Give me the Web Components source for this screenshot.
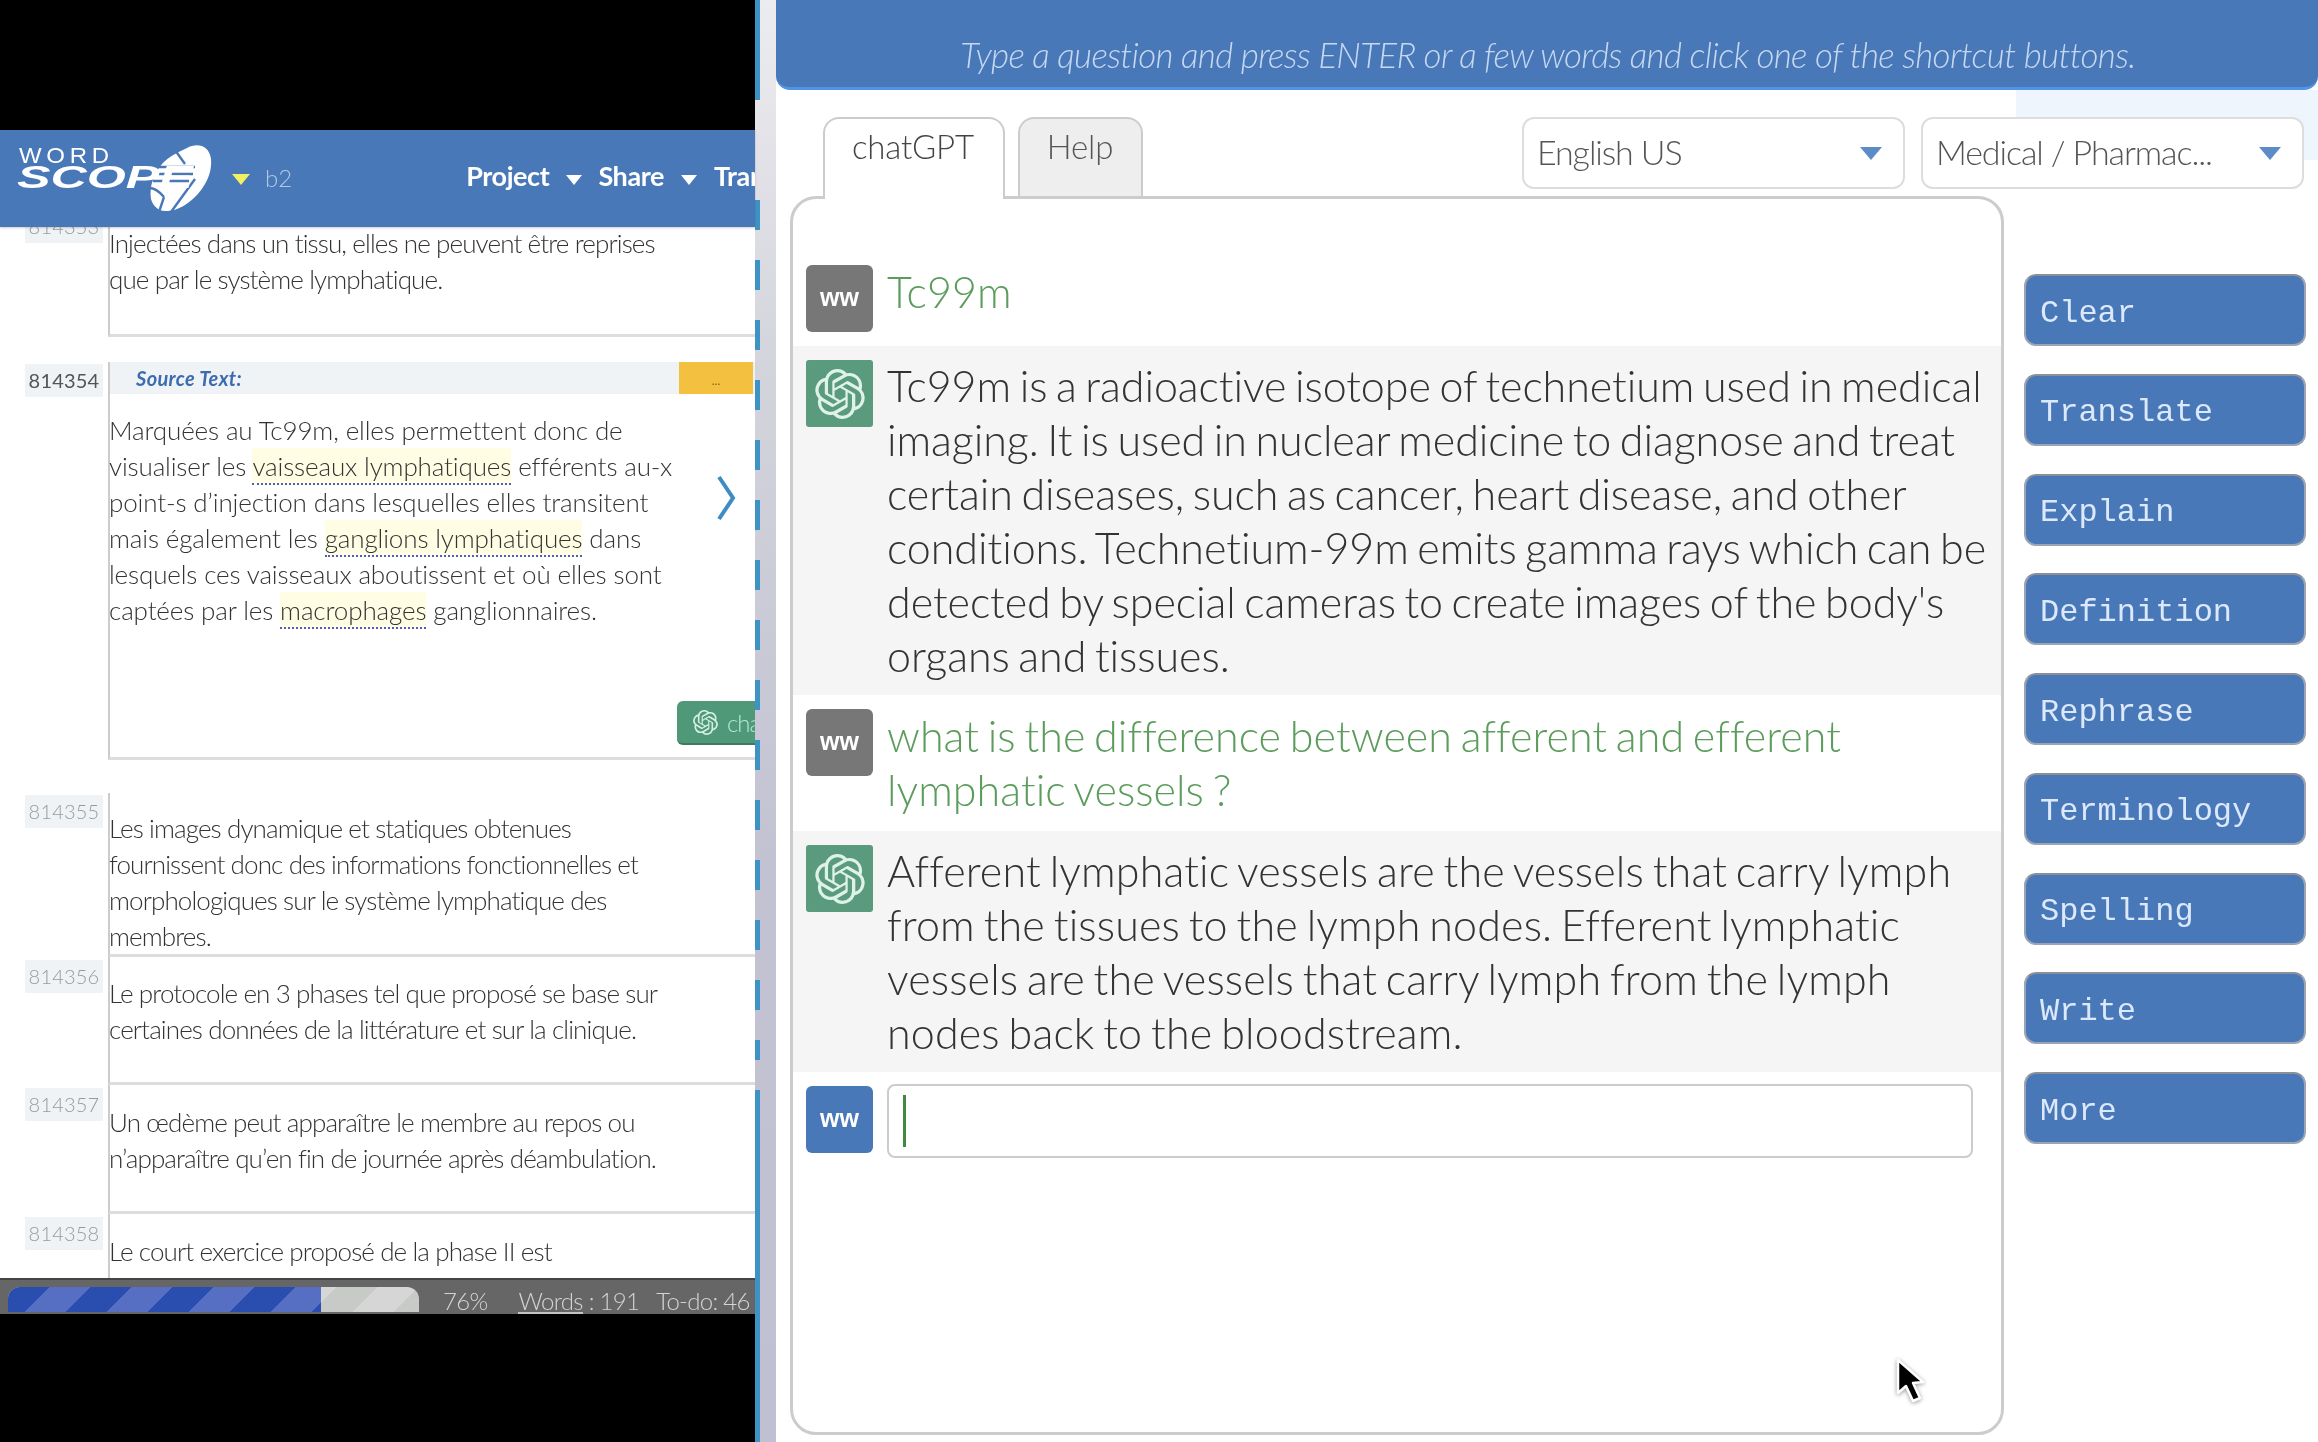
<!DOCTYPE html>
<html lang="en"><head><meta charset="utf-8"><title>Wordscope</title>
<style>
html,body{margin:0;padding:0;height:1442px;width:2318px;overflow:hidden;background:#fff;font-family:Lato,"Liberation Sans",sans-serif}
body{display:flex;filter:blur(.5px)}
</style></head><body>
<wc-editor>
  <wc-segment num="814353" height="127" top="15" offset="-17" idtop="0" style="--id:#999">Injectées dans un tissu, elles ne peuvent être reprises<br>que par le système lymphatique.</wc-segment>
  <wc-segment num="814354" height="398" top="18" gap="25" idtop="2" active style="--id:#555">Marquées au Tc99m, elles permettent donc de<br>visualiser les <wc-term>vaisseaux lymphatiques</wc-term> efférents au-x<br>point-s d’injection dans lesquelles elles transitent<br>mais également les <wc-term>ganglions lymphatiques</wc-term> dans<br>lesquels ces vaisseaux aboutissent et où elles sont<br>captées par les <wc-term>macrophages</wc-term> ganglionnaires.</wc-segment>
  <wc-segment num="814355" height="163" top="17" gap="33" idtop="2" style="--id:#999">Les images dynamique et statiques obtenues<br>fournissent donc des informations fonctionnelles et<br>morphologiques sur le système lymphatique des<br>membres.</wc-segment>
  <wc-segment num="814356" height="129" top="19" idtop="4" style="--id:#999">Le protocole en 3 phases tel que proposé se base sur<br>certaines données de la littérature et sur la clinique.</wc-segment>
  <wc-segment num="814357" height="129" top="19" idtop="3" style="--id:#999">Un œdème peut apparaître le membre au repos ou<br>n’apparaître qu’en fin de journée après déambulation.</wc-segment>
  <wc-segment num="814358" height="80" top="19" idtop="3" open style="--id:#999">Le court exercice proposé de la phase II est</wc-segment>
</wc-editor>
<wc-divider></wc-divider>
<wc-assistant>
  <wc-msg who="user" kind="q" style="letter-spacing:.05px">Tc99m</wc-msg>
  <wc-msg who="ai" style="letter-spacing:-.06px">Tc99m is a radioactive isotope of technetium used in medical<br>imaging. It is used in nuclear medicine to diagnose and treat<br>certain diseases, such as cancer, heart disease, and other<br>conditions. Technetium-99m emits gamma rays which can be<br>detected by special cameras to create images of the body's<br>organs and tissues.</wc-msg>
  <wc-msg who="user" kind="q" style="letter-spacing:.05px">what is the difference between afferent and efferent<br>lymphatic vessels ?</wc-msg>
  <wc-msg who="ai" style="letter-spacing:.15px">Afferent lymphatic vessels are the vessels that carry lymph<br>from the tissues to the lymph nodes. Efferent lymphatic<br>vessels are the vessels that carry lymph from the lymph<br>nodes back to the bloodstream.</wc-msg>
  <wc-prompt></wc-prompt>
</wc-assistant>
<wc-cursor></wc-cursor>
<script>
const OPENAI='M22.2819 9.8211a5.9847 5.9847 0 0 0-.5157-4.9108 6.0462 6.0462 0 0 0-6.5098-2.9A6.0651 6.0651 0 0 0 4.9807 4.1818a5.9847 5.9847 0 0 0-3.9977 2.9 6.0462 6.0462 0 0 0 .7427 7.0966 5.98 5.98 0 0 0 .511 4.9107 6.051 6.051 0 0 0 6.5146 2.9001A5.9847 5.9847 0 0 0 13.2599 24a6.0557 6.0557 0 0 0 5.7718-4.2058 5.9894 5.9894 0 0 0 3.9977-2.9001 6.0557 6.0557 0 0 0-.7475-7.0729zm-9.022 12.6081a4.4755 4.4755 0 0 1-2.8764-1.0408l.1419-.0804 4.7783-2.7582a.7948.7948 0 0 0 .3927-.6813v-6.7369l2.02 1.1686a.071.071 0 0 1 .038.052v5.5826a4.504 4.504 0 0 1-4.4945 4.4944zm-9.6607-4.1254a4.4708 4.4708 0 0 1-.5346-3.0137l.142.0852 4.783 2.7582a.7712.7712 0 0 0 .7806 0l5.8428-3.3685v2.3324a.0804.0804 0 0 1-.0332.0615L9.74 19.9502a4.4992 4.4992 0 0 1-6.1408-1.6464zM2.3408 7.8956a4.485 4.485 0 0 1 2.3655-1.9728V11.6a.7664.7664 0 0 0 .3879.6765l5.8144 3.3543-2.0201 1.1685a.0757.0757 0 0 1-.071 0l-4.8303-2.7865A4.504 4.504 0 0 1 2.3408 7.872zm16.5963 3.8558L13.1038 8.364 15.1192 7.2a.0757.0757 0 0 1 .071 0l4.8303 2.7913a4.4944 4.4944 0 0 1-.6765 8.1042v-5.6772a.79.79 0 0 0-.407-.667zm2.0107-3.0231l-.142-.0852-4.7735-2.7818a.7759.7759 0 0 0-.7854 0L9.409 9.2297V6.8974a.0662.0662 0 0 1 .0284-.0615l4.8303-2.7866a4.4992 4.4992 0 0 1 6.6802 4.66zM8.3065 12.863l-2.02-1.1638a.0804.0804 0 0 1-.038-.0567V6.0742a4.4992 4.4992 0 0 1 7.3757-3.4537l-.142.0805L8.704 5.459a.7948.7948 0 0 0-.3927.6813zm1.0976-2.3654l2.602-1.4998 2.6069 1.4998v2.9994l-2.5974 1.4997-2.6067-1.4997Z';
const logoSvg=(s,c)=>`<svg viewBox="0 0 24 24" width="${s}" height="${s}" fill="${c}" style="flex:none"><path d="${OPENAI}"/></svg>`;
function comp(name,css,html,init){
  customElements.define(name,class extends HTMLElement{
    constructor(){super();this.attachShadow({mode:'open'});}
    connectedCallback(){
      const h=typeof html==='function'?html(this):html;
      this.shadowRoot.innerHTML=`<style>${css}</style>${h}`;
      if(init)init(this);
    }
  });
}
comp('wc-logo',`
:host{display:inline-grid;width:196px;height:70px;color:#fff;flex:none}
.t{grid-area:1/1;align-self:start;font-family:"Liberation Sans",sans-serif;white-space:nowrap}
.w{font-size:24px;line-height:17px;letter-spacing:4.7px;margin-top:4px;transform:scaleY(.9);transform-origin:top left}
.s{font-size:31px;line-height:24px;font-weight:700;font-style:italic;margin-top:22.5px;transform:scaleX(1.62);transform-origin:left top;margin-left:-2px}
svg{grid-area:1/1;justify-self:start;width:196px;height:70px;overflow:visible}
`,`<div class="t w">WORD</div><div class="t s">SCOPE</div>
<svg viewBox="0 0 196 70"><g transform="translate(-20,-146)">
<path fill="#fff" d="M188 150C197 145 210 146 212 161C213 172 209 181 206 186C198 200 182 213 168 213C160 214 154 208 152 201C150 188 155 176 163 166C170 158 180 154 188 150Z"/>
<path fill="none" stroke="#4878b8" stroke-width="2.4" d="M160 169H196M158 176H194M154 183H190M176 152L186 166M196 181L172 214M150 190C156 190 160 193 165 199M165 199L160 214"/>
</g></svg>`);
comp('wc-nav',`:host{display:flex;align-items:center;white-space:nowrap;color:#fff;font:700 27px Lato,sans-serif;letter-spacing:-.4px}
i{display:inline-block;width:0;height:0;border:8px solid transparent;border-top:10px solid #fff;border-bottom:0;margin:9px 0 0 0;}`,
`<span>Project</span><i style="margin-left:17px;margin-right:16px"></i><span>Share</span><i style="margin-left:17px;margin-right:17px"></i><span>Translate</span>`);
comp('wc-editor-bar',`
:host{display:flex;align-items:center;height:97px;background:#4878b8;padding:0 0 0 19px;overflow:hidden;flex:none;position:relative;z-index:2;box-shadow:0 1px 2px rgba(0,0,0,.2)}
.c{width:0;height:0;border:9.5px solid transparent;border-top:11px solid #f2f060;border-bottom:0;margin-left:17px;margin-top:2px}
.b{margin-left:15px;font:300 24px Lato,sans-serif;color:#b4c8e4;margin-top:-3px}
wc-nav{margin-left:174px;margin-top:-6px}
`,`<wc-logo></wc-logo><span class="c"></span><span class="b">b2</span><wc-nav></wc-nav>`);
comp('wc-term',`:host{display:inline;background:#fffee4;border-bottom:2px dotted #4a5ec4;padding:2px 0 1px}`,`<slot></slot>`);
comp('wc-segment',`
:host{display:block;--h:100px}
.row{display:grid;grid-template-columns:108px 1fr;height:var(--h)}
.id{margin-left:25px;width:78px;height:33px;background:#f0f3f5;color:var(--id,#999);font:300 20px/33px Lato,"Liberation Sans",sans-serif;text-align:center;letter-spacing:.2px;margin-top:var(--idtop,0)}
:host([active]) .id{font-weight:400}
.box{border-left:2px solid #ccc;border-bottom:3px solid #ddd;position:relative;min-width:0}
.box.open{border-bottom:0}
.head{display:flex;height:32px;background:#f0f3f6}
.src{flex:1;padding-left:26px;font:italic 700 20px/32px Lato,sans-serif;letter-spacing:.35px;color:#3c6cb0}
.dots{width:74px;margin-right:2px;background:#f4c040;color:#7a5a18;font:12px/38px Lato,sans-serif;text-align:center}
.txt{white-space:nowrap;color:#333;font:300 26px/36px Lato,sans-serif;letter-spacing:-.88px;padding-top:var(--top,18px);margin-left:-1px}
:host([active]) .txt{letter-spacing:-.13px}
.chev{position:absolute;left:605px;top:113px}
.chat{position:absolute;left:567px;top:339px;width:120px;height:44px;box-sizing:border-box;background:#4f9878;border-radius:6px;border-bottom:2px solid #3e7a60;display:flex;align-items:center;gap:9px;padding-left:16px;color:#b4e8d0;font:300 24px Lato,sans-serif;letter-spacing:-1px;white-space:nowrap}
`,el=>{
  const active=el.hasAttribute('active'),open=el.hasAttribute('open');
  el.style.setProperty('--h',el.getAttribute('height')+'px');
  el.style.setProperty('--top',el.getAttribute('top')+'px');
  el.style.setProperty('--idtop',el.getAttribute('idtop')+'px');
  el.style.marginTop=(el.getAttribute('offset')||el.getAttribute('gap')||0)+'px';
  return `<div class="row"><div class="id">${el.getAttribute('num')}</div><div class="box ${open?'open':''}">`+
  (active?`<div class="head"><div class="src">Source Text:</div><div class="dots">...</div></div>`:'')+
  `<div class="txt"><slot></slot></div>`+
  (active?`<svg class="chev" width="22" height="46" viewBox="0 0 22 46"><path d="M4 2L18 23L4 44" fill="none" stroke="#3d8cc4" stroke-width="4"/></svg>
  <div class="chat">${logoSvg(25,'#d4efe2')}<span>chatGPT</span></div>`:'')+`</div></div>`;
});
comp('wc-progress',`
:host{display:block;width:411px;height:25px;border-radius:12px 12px 0 0;overflow:hidden;background:repeating-linear-gradient(135deg,#c8cac8 0 29px,#d6d6d6 29px 58px);flex:none}
div{width:313px;height:100%;background:repeating-linear-gradient(135deg,#2a4db0 0 29px,#566fc2 29px 58px)}
`,`<div></div>`);
comp('wc-status',`
:host{display:flex;align-items:center;height:36px;box-sizing:border-box;flex:none;background:#666;border-top:2px solid #444;padding:7px 0 0 8px;color:#d4d4d4;font:300 24px Lato,sans-serif;letter-spacing:-.7px;white-space:nowrap;overflow:hidden}
wc-progress{align-self:flex-start}
u{text-decoration:none;border-bottom:2px solid #c4c4c4;display:inline-block;line-height:22px}
.a{margin-left:24px}.b{margin-left:31px}.c{margin-left:17px}
`,`<wc-progress></wc-progress><span class="a">76%</span><span class="b"><u>Words</u> : 191</span><span class="c">To-do: 46</span>`);
comp('wc-editor',`
:host{display:flex;flex-direction:column;width:755px;height:1442px;flex:none;background:#000}
.top{height:130px;flex:none}.bottom{flex:1}
.list{height:1051px;flex:none;background:#fff;overflow:hidden}
`,`<div class="top"></div><wc-editor-bar></wc-editor-bar><div class="list"><slot></slot></div><wc-status></wc-status><div class="bottom"></div>`);
comp('wc-divider',`
:host{display:block;width:21px;height:1442px;flex:none;
background:
 linear-gradient(#3d94c4,#3d94c4) 0 0/5px 100px no-repeat,
 linear-gradient(#3d94c4,#3d94c4) 0 1090px/5px 352px no-repeat,
 repeating-linear-gradient(#3d94c4 0 30px,transparent 30px 60px) 0 200px/5px 860px no-repeat,
 linear-gradient(#ececf0,#d4d4dc 25%,#c2c2d2 60%,#c0c0d2)}
`,``);
comp('wc-chat-head',`
:host{display:block;height:90px;box-sizing:border-box;background:#4878b8;border-bottom:3px solid #4f94e6;border-radius:0 0 14px 14px;text-align:center;color:#c6d8f0;font:italic 300 35px/108px Lato,sans-serif;letter-spacing:-.67px;white-space:nowrap;padding-left:2px}
`,`<slot></slot>Type a question and press ENTER or a few words and click one of the shortcut buttons.`);
comp('wc-tab',`
:host{display:block;height:79px;box-sizing:border-box;border:2px solid #ccc;border-bottom:0;border-radius:16px 16px 0 0;padding:0 28px 0 27px;font:300 33px/54px Lato,sans-serif;letter-spacing:-.2px;color:#555;background:#eee;white-space:nowrap}
:host([on]){background:#fff;height:82px;margin-bottom:-3px;position:relative;z-index:2;color:#444;padding-right:29px}
`,`<slot></slot>`);
comp('wc-select',`
:host{display:flex;align-items:center;width:383px;height:72px;box-sizing:border-box;border:2px solid #ddd;border-radius:12px;background:#fff;padding:0 14px 3px 13px;font:300 34px Lato,sans-serif;letter-spacing:-1.1px;color:#555;white-space:nowrap}
span{flex:1}
i{width:0;height:0;border:11px solid transparent;border-top:13px solid #5c8cc8;border-bottom:0;margin:3px 7px 0 0}
`,`<span><slot></slot></span><i></i>`);
comp('wc-side',`
:host{display:flex;align-items:center;height:72px;box-sizing:border-box;border:2px solid #9aa4b2;border-top-color:#8a8f98;border-radius:12px;background:#4878b8;padding:6px 0 0 14px;color:#dce8fb;font:32px "Liberation Mono",monospace;white-space:nowrap}
`,`<slot></slot>`);
comp('wc-msg',`
:host{display:grid;grid-template-columns:67px 1fr;column-gap:14px;padding:14px 0 12px 13px;white-space:nowrap;color:#333;font:300 43px/54px Lato,sans-serif;word-spacing:-3px}
:host([who=ai]){background:#f5f5f5}
:host([kind=q]){color:#5c9c5c;padding-bottom:14px}
:host([who=ai]) .t{margin-top:-1px}
.av{width:67px;height:67px;border-radius:6px;background:#777;color:#fff;display:flex;align-items:center;justify-content:center;font:700 25px "Liberation Sans",sans-serif;letter-spacing:0;word-spacing:0;padding-bottom:2px;box-sizing:border-box}
.av.g{background:#5a9a7d;border-radius:3px;padding:0}
`,el=>(el.getAttribute('who')==='ai'?`<div class="av g">${logoSvg(50,'#dff2e8')}</div>`:`<div class="av">ww</div>`)+`<div class="t"><slot></slot></div>`);
comp('wc-prompt',`
:host{display:grid;grid-template-columns:67px 1086px;column-gap:14px;padding:12px 0 0 13px}
.av{width:67px;height:67px;margin-top:2px;border-radius:6px;background:#4878b8;color:#fff;display:flex;align-items:center;justify-content:center;font:700 25px "Liberation Sans",sans-serif;letter-spacing:0;padding-bottom:2px;box-sizing:border-box}
.in{height:74px;box-sizing:border-box;border:2px solid #ccc;border-radius:8px;padding:9px 0 0 14px}
.in i{display:block;width:2.5px;height:52px;background:#3f8a3f}
`,`<div class="av">ww</div><div class="in"><i></i></div>`);
comp('wc-assistant',`
:host{display:flex;flex-direction:column;flex:1;height:1442px;min-width:0;background:linear-gradient(#eef5fc,#eef5fc) right 90px/302px 70px no-repeat #fff}
.tools{display:flex;margin-top:27px;height:79px;padding:0 14px 0 47px}
.tools wc-tab+wc-tab{margin-left:13px}
.sel{display:flex;gap:16px;margin-left:auto;align-items:flex-start}
.main{display:flex;padding-left:14px}
.panel{width:1214px;height:1239px;box-sizing:border-box;border:3px solid #ccc;border-radius:26px;padding-top:52px;background:#fff;overflow:hidden}
.side{width:282px;margin-left:20px;padding-top:78px;display:flex;flex-direction:column;gap:27.75px}
`,`<wc-chat-head></wc-chat-head>
<div class="tools"><wc-tab on>chatGPT</wc-tab><wc-tab>Help</wc-tab><div class="sel"><wc-select>English US</wc-select><wc-select>Medical / Pharmac...</wc-select></div></div>
<div class="main"><div class="panel"><slot></slot></div><div class="side"><wc-side>Clear</wc-side><wc-side>Translate</wc-side><wc-side>Explain</wc-side><wc-side>Definition</wc-side><wc-side>Rephrase</wc-side><wc-side>Terminology</wc-side><wc-side>Spelling</wc-side><wc-side>Write</wc-side><wc-side>More</wc-side></div></div>`);
comp('wc-cursor',`:host{position:absolute;left:1892px;top:1353px;width:40px;height:56px;display:block}`,
`<svg width="40" height="56" viewBox="0 0 40 56"><path d="M6 7V40L14 33L21 48L28 45L21 30L31 29Z" fill="#000" stroke="#fff" stroke-width="2.5" stroke-linejoin="round" style="filter:drop-shadow(0 1px 2px rgba(0,0,0,.4))"/></svg>`);
</script>
</body></html>
